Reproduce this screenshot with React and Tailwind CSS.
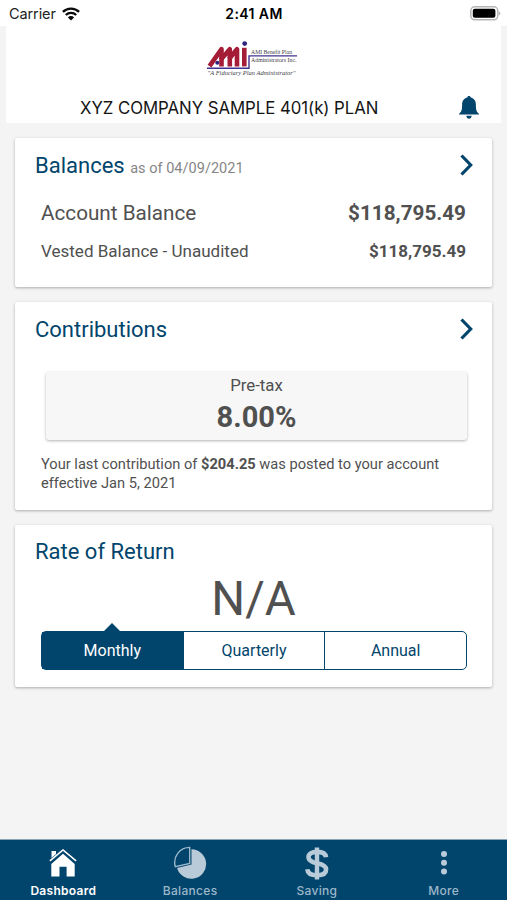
import { useState } from 'react';

const periods = ['Monthly', 'Quarterly', 'Annual'];

const WifiIcon = () => (
    <svg width="18" height="14" viewBox="0 0 18 14" fill="none" stroke="#0a0a0a" strokeWidth="2.3">
        <path d="M0.9 4.9a11.6 11.6 0 0 1 16.2 0" />
        <path d="M3.8 8a7.4 7.4 0 0 1 10.4 0" />
        <path d="M9 13.6 5.9 10.4a4.4 4.4 0 0 1 6.2 0Z" fill="#0a0a0a" stroke="none" />
    </svg>
);

const BatteryIcon = () => (
    <svg width="31" height="15" viewBox="0 0 31 15">
        <rect x="0.8" y="0.8" width="27" height="13" rx="4" fill="#fff" stroke="#b5b5b5" strokeWidth="1.5" />
        <rect x="2.8" y="2.8" width="22.6" height="9" rx="2" fill="#000" />
        <path d="M28.8 5.2q1.6.8 1.6 2.1t-1.6 2.1Z" fill="#b5b5b5" />
    </svg>
);

const BellIcon = () => (
    <svg width="20" height="23" viewBox="0 0 20 23" fill="#02456c">
        <path d="M10 0c1 0 1.6.6 1.7 1.5 3.2.7 5.2 3.4 5.2 6.9 0 5.2.5 7.3 2.7 9 .4.3.4.7.4.8v.3H0v-.3c0-.1 0-.5.4-.8C2.6 15.7 3.1 13.6 3.1 8.4c0-3.5 2-6.2 5.2-6.9C8.4.6 9 0 10 0Z" />
        <path d="M7.3 19.7h5.4C12.5 21.6 11.5 22.7 10 22.7S7.5 21.6 7.3 19.7Z" />
    </svg>
);

const Logo = () => (
    <svg className="overflow-visible" width="93" height="37" viewBox="0 0 93 37">
        <g stroke="#a51c36" fill="none" strokeWidth="4.6" strokeLinejoin="round">
            <path d="M2.5 25.2 14.5 8.2V25.4" />
            <path d="M13.5 19 22.8 8.2V25.4" />
            <path d="M22 18 30 8.2V25.4" />
            <path d="M37.3 6.8V25.4" />
        </g>
        <circle cx="37.7" cy="2.6" r="2.4" fill="#30257f" />
        <circle cx="10.3" cy="21.7" r="2" fill="#30257f" />
        <path d="M0 27.2H42V14.9H90" fill="none" stroke="#40338f" strokeWidth="1.4" />
        <g fill="#3f3f4a" fontFamily="'Liberation Serif', serif">
            <text x="44" y="13" fontSize="5.7" textLength="41" lengthAdjust="spacingAndGlyphs">AMI Benefit Plan</text>
            <text x="44" y="21" fontSize="5.7" textLength="45.5" lengthAdjust="spacingAndGlyphs">Administrators Inc.</text>
            <text x="0.5" y="34" fontSize="6.5" fontStyle="italic" textLength="88" lengthAdjust="spacingAndGlyphs">
                "A Fiduciary Plan Administrator"
            </text>
        </g>
    </svg>
);

const Chevron = () => (
    <svg width="13" height="22" viewBox="0 0 13 22" fill="none" stroke="#02456c" strokeWidth="3.2">
        <path d="M1.5 1.5 10.7 11 1.5 20.5" />
    </svg>
);

const HomeIcon = () => (
    <svg width="28" height="28" viewBox="0 0 28 28" fill="#fff">
        <path d="M2.5 2H7V7.5L2.5 11.5Z" />
        <path d="M14 4.8 25.7 15V27.5H17.6V17.7H10.5V27.5H2.3V15Z" />
        <path d="M.9 12.6 14 1.5 27.1 12.6" fill="none" stroke="#02456c" strokeWidth="3.6" />
        <path d="M.9 11.9 14 1 27.1 11.9" fill="none" stroke="#fff" strokeWidth="1.6" />
    </svg>
);

const PieIcon = () => (
    <svg width="34" height="34" viewBox="0 0 34 34">
        <path d="M18.5 3.2A14.8 14.8 0 1 1 4.1 22L18.5 18.5Z" fill="#b9cbd9" />
        <path d="M16.7 1.4V17.4L2.3 20.6A15 15 0 0 1 16.7 1.4Z" fill="#02456c" stroke="#9bb7ca" strokeWidth="1.4" />
    </svg>
);

const DollarIcon = () => (
    <svg width="24" height="33" viewBox="0 0 24 33" fill="none" stroke="#b9cbd9">
        <path d="M21 10.2C20.6 6.5 17.5 4.9 12 4.9 6.4 4.9 3.5 7 3.5 10.3c0 3.4 2.7 4.8 8.5 5.9 6.2 1.2 9.1 2.7 9.1 6.3 0 3.5-3.2 5.7-9.1 5.7-6.1 0-9.3-2-9.7-6" strokeWidth="4.6" />
        <path d="M12 .5V32.5" strokeWidth="4.4" />
    </svg>
);

const MoreIcon = () => (
    <svg width="8" height="26" viewBox="0 0 8 26" fill="#b9cbd9">
        <circle cx="4" cy="4" r="3" />
        <circle cx="4" cy="12.8" r="3" />
        <circle cx="4" cy="21.6" r="3" />
    </svg>
);

const tabs = [
    { label: 'Dashboard', Icon: HomeIcon },
    { label: 'Balances', Icon: PieIcon },
    { label: 'Saving', Icon: DollarIcon },
    { label: 'More', Icon: MoreIcon },
];

const App = () => {
    const [period, setPeriod] = useState('Monthly');
    const [activeTab, setActiveTab] = useState('Dashboard');

    return (
        <div className="w-full h-screen bg-[#f4f4f4] flex flex-col overflow-hidden font-['Roboto',sans-serif] text-[#505050]">
            <div className="h-[26px] shrink-0 bg-white grid grid-cols-3 items-center pl-[9px] pr-[6px] font-['Inter',sans-serif] text-black">
                <div className="flex items-center gap-[6px] pt-[1px]">
                    <span className="text-[14.5px] tracking-[-0.1px] text-[#222]">Carrier</span>
                    <WifiIcon />
                </div>
                <span className="text-center text-[14px] font-semibold tracking-[0.4px] pt-[1px] pr-[2px] whitespace-nowrap">2:41 AM</span>
                <div className="flex justify-end"><BatteryIcon /></div>
            </div>

            <header className="h-[97px] shrink-0 mx-[6px] bg-white flex flex-col items-center pt-[15px]">
                <Logo />
                <div className="w-full flex items-center pl-[74px] pr-[22px] mt-[16px]">
                    <h1 className="flex-1 font-['Inter',sans-serif] text-[16.8px] leading-[26px] tracking-[-0.04px] pt-[1px] text-[#151515] whitespace-nowrap">
                        XYZ COMPANY SAMPLE 401(k) PLAN
                    </h1>
                    <BellIcon />
                </div>
            </header>

            <main className="flex-1 flex flex-col gap-[15px] px-[15px] pt-[15px]">
                <section className="h-[149px] bg-white rounded-[2px] shadow-[0_1px_3px_rgba(0,0,0,0.3)]">
                    <div className="flex items-center justify-between pl-5 pr-[19px] pt-[10px] h-[44px]">
                        <h2 className="text-[22px] text-[#02456c] leading-8 pt-[5px]">
                            Balances <span className="text-[14.5px] text-[#868686] tracking-[0.03px]">as of 04/09/2021</span>
                        </h2>
                        <Chevron />
                    </div>
                    <div className="flex items-center justify-between px-[26px] mt-[20px] h-6">
                        <span className="text-[20.7px]">Account Balance</span>
                        <span className="text-[20.7px] font-bold">$118,795.49</span>
                    </div>
                    <div className="flex items-center justify-between px-[26px] mt-[15px] h-[22px]">
                        <span className="text-[17.05px]">Vested Balance - Unaudited</span>
                        <span className="text-[17.05px] font-bold">$118,795.49</span>
                    </div>
                </section>

                <section className="h-[208px] bg-white rounded-[2px] shadow-[0_1px_3px_rgba(0,0,0,0.3)]">
                    <div className="flex items-center justify-between pl-5 pr-[19px] pt-[10px] h-[44px]">
                        <h2 className="text-[22px] text-[#02456c] pt-[1px]">Contributions</h2>
                        <Chevron />
                    </div>
                    <div className="h-[68px] mt-[26px] ml-[31px] mr-[25px] bg-[#f7f7f7] rounded-[3px] shadow-[0_1px_3px_rgba(0,0,0,0.3)] flex flex-col items-center">
                        <span className="text-[16.8px] leading-[27px]">Pre-tax</span>
                        <span className="text-[29px] leading-[37px] font-bold">8.00%</span>
                    </div>
                    <p className="mt-[15px] pl-[26px] text-[14.65px] leading-[19.3px]">
                        Your last contribution of <strong>$204.25</strong> was posted to your account
                        <br />
                        effective Jan 5, 2021
                    </p>
                </section>

                <section className="h-[162px] bg-white rounded-[2px] shadow-[0_1px_3px_rgba(0,0,0,0.3)]">
                    <h2 className="pl-5 pt-[11px] text-[22px] leading-[32px] text-[#02456c]">Rate of Return</h2>
                    <div className="text-center text-[47.5px] leading-[58px] pt-[2px]">N/A</div>
                    <div className="ml-[26px] mr-[25px] mt-[3px] h-[39px] flex border border-[#02456c] rounded-[5px]">
                        {periods.map((name) => (
                            <button
                                key={name}
                                onClick={() => setPeriod(name)}
                                className={`relative flex-1 text-[16px] border-r border-[#02456c] last:border-r-0 ${period === name ? 'bg-[#02456c] text-white' : 'text-[#02456c]'}`}
                            >
                                {period === name && (
                                    <svg className="absolute left-1/2 -top-[10px] -translate-x-1/2" width="18" height="10" viewBox="0 0 18 10">
                                        <path d="M0 10 9 1l9 9Z" fill="#02456c" />
                                    </svg>
                                )}
                                {name}
                            </button>
                        ))}
                    </div>
                </section>
            </main>

            <nav className="h-[61px] shrink-0 bg-[#02456c] border-t border-[#8ba4b4] grid grid-cols-4 font-['Inter',sans-serif]">
                {tabs.map(({ label, Icon }) => (
                    <button
                        key={label}
                        onClick={() => setActiveTab(label)}
                        className={`flex flex-col items-center pt-[6px] text-[12px] tracking-[0.3px] ${activeTab === label ? 'font-semibold text-white' : 'font-medium text-[#9bb7ca]'}`}
                    >
                        <span className="h-[34px] flex items-center"><Icon /></span>
                        <span className="leading-[22px]">{label}</span>
                    </button>
                ))}
            </nav>
        </div>
    );
};

export default App;
